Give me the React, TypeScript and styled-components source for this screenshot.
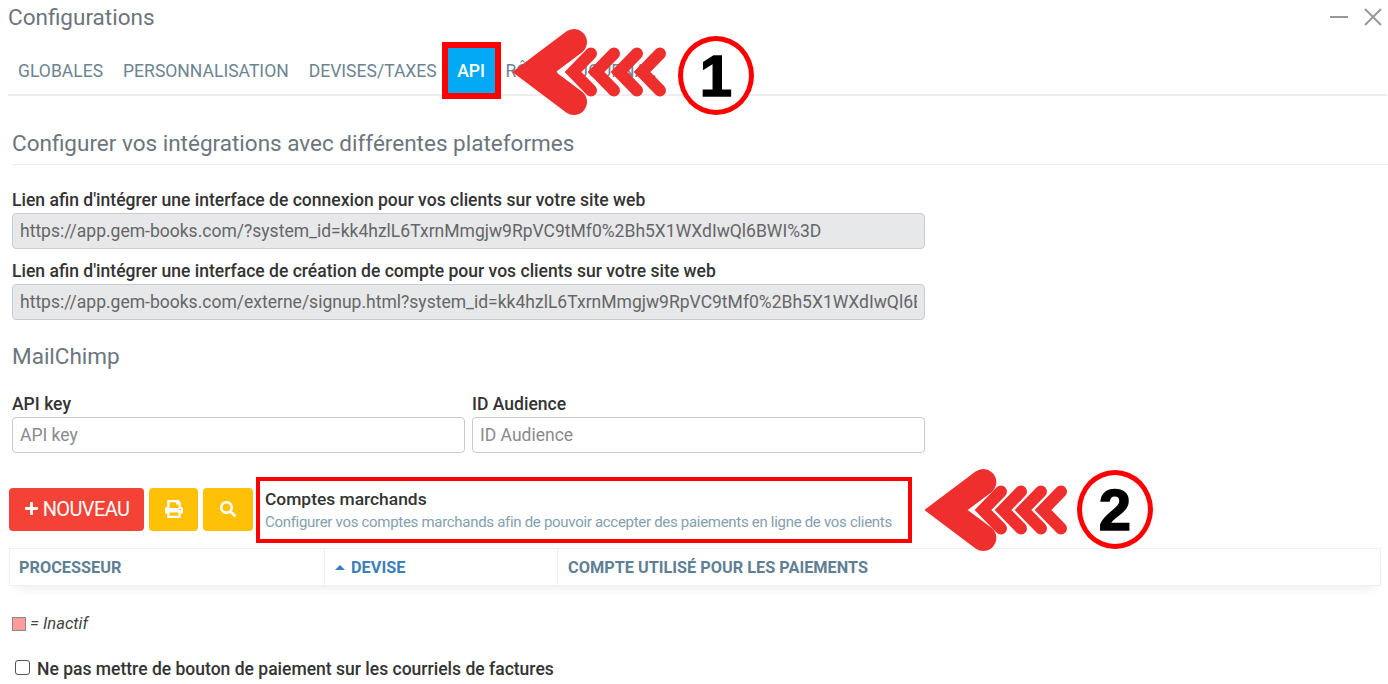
import React from "react";
import styled, { createGlobalStyle } from "styled-components";
import { FaPlus, FaPrint, FaSearch } from "react-icons/fa";

const GlobalStyle = createGlobalStyle`
  html, body {
    margin: 0;
    padding: 0;
    background: #fff;
    overflow: hidden;
  }
  * {
    box-sizing: border-box;
  }
`;

const Page = styled.div`
  position: relative;
  width: 1388px;
  height: 684px;
  overflow: hidden;
  font-family: Roboto, "Liberation Sans", sans-serif;
  color: #333;
`;
const TitleBar = styled.div`
  height: 42px;
  padding: 0 0 8px 8px;
  display: flex;
  justify-content: space-between;
  align-items: center;
`;
const Title = styled.div`
  font-size: 22.5px;
  color: #6c757d;
`;
const WindowIcons = styled.div`
  display: flex;
  gap: 14px;
  padding-right: 5px;
  color: #999;
`;
const Tabs = styled.div`
  height: 54px;
  margin: 0 1px 0 8px;
  display: flex;
  align-items: stretch;
  border-bottom: 2px solid #eee;
`;
const Tab = styled.div<{ $active?: boolean }>`
  padding: 0 ${(p) => (p.$active ? "10.5px" : "10px")};
  margin-top: 5px;
  display: flex;
  align-items: center;
  font-size: 17.55px;
  font-weight: ${(p) => (p.$active ? 500 : 400)};
  color: ${(p) => (p.$active ? "#fff" : "#6c8491")};
  background: ${(p) => (p.$active ? "#03a9f4" : "transparent")};
  outline: ${(p) => (p.$active ? "6px solid #ff0000" : "none")};
  outline-offset: -1px;
`;
const Content = styled.div`
  padding-left: 12px;
`;
const SectionTitle = styled.div`
  height: 69px;
  padding-top: 32px;
  font-size: 22.5px;
  line-height: 30px;
  color: #6c757d;
  border-bottom: 1px solid #eee;
`;
const Form = styled.div`
  width: 913px;
`;
const FieldLabel = styled.label`
  display: block;
  height: 25px;
  font-size: 17.55px;
  font-weight: 500;
  line-height: 25px;
  color: #333;
`;
const TextField = styled.input<{ $disabled?: boolean }>`
  display: block;
  width: 100%;
  height: 36px;
  padding: 0 7px;
  border: 1px solid #c9cbcf;
  border-radius: 4px;
  outline: none;
  font-family: inherit;
  font-size: 17.52px;
  color: #666;
  background: ${(p) => (p.$disabled ? "#e7e8ea" : "#fff")};
  &::placeholder {
    color: #8a8a8a;
    opacity: 1;
  }
`;
const LinkGroup = styled.div`
  margin-top: 10px;
`;
const LinkGroupFirst = styled(LinkGroup)`
  margin-top: 23px;
`;
const SubTitle = styled.div`
  margin-top: 20px;
  font-size: 22.5px;
  line-height: 32px;
  color: #6c757d;
`;
const FieldRow = styled.div`
  margin-top: 20px;
  display: grid;
  grid-template-columns: 1fr 1fr;
  gap: 7px;
`;
const Toolbar = styled.div`
  margin: 24px 0 0 9px;
  display: flex;
  align-items: flex-start;
  gap: 5px;
`;
const ActionButton = styled.div<{ $color: string; $width: number }>`
  width: ${(p) => p.$width}px;
  height: 43px;
  margin-top: 11px;
  padding-bottom: 2px;
  display: flex;
  align-items: center;
  justify-content: center;
  gap: 4px;
  border-radius: 4px;
  color: #fff;
  font-size: 20px;
  letter-spacing: -0.6px;
  background: ${(p) => p.$color};
`;
const InfoBox = styled.div`
  width: 656px;
  height: 66px;
  margin-left: -2px;
  padding: 8px 0 0 5px;
  border: 4px solid #ff0000;
`;
const InfoTitle = styled.div`
  font-size: 17.4px;
  font-weight: 500;
  line-height: 20px;
`;
const InfoText = styled.div`
  margin-top: 4px;
  font-size: 15px;
  letter-spacing: -0.3px;
  line-height: 18px;
  white-space: nowrap;
  color: #84a0ae;
`;
const Table = styled.div`
  width: 1372px;
  height: 38px;
  margin: 5px 0 0 9px;
  display: grid;
  grid-template-columns: 314px 233px 1fr;
  border: 1px solid #edf1f5;
  box-shadow: 0 8px 12px -6px rgba(0, 0, 0, 0.08);
`;
const HeaderCell = styled.div<{ $sorted?: boolean }>`
  padding-left: 9px;
  display: flex;
  align-items: center;
  gap: 6px;
  font-size: 16.3px;
  font-weight: 700;
  color: ${(p) => (p.$sorted ? "#3d7fb8" : "#5f7f94")};
  & + & {
    padding-left: 10px;
    border-left: 1px solid #edf1f5;
  }
`;
const SortCaret = styled.span`
  width: 0;
  height: 0;
  border-left: 5px solid transparent;
  border-right: 5px solid transparent;
  border-bottom: 5px solid #3d7fb8;
`;
const Legend = styled.div`
  margin: 28px 0 0 12px;
  display: flex;
  align-items: center;
  gap: 4px;
  font-size: 16.6px;
  font-style: italic;
  line-height: 20px;
  color: #444;
`;
const Swatch = styled.span`
  width: 14px;
  height: 14px;
  background: #ff9c9c;
  border: 1px solid #888;
`;
const CheckRow = styled.label`
  margin: 24px 0 0 15px;
  display: flex;
  align-items: center;
  gap: 7px;
  font-size: 17.53px;
  font-weight: 500;
  line-height: 22px;
  color: #333;
`;
const CheckBox = styled.span`
  width: 15px;
  height: 15px;
  margin-top: -3px;
  border: 1px solid #555;
  border-radius: 3px;
  background: #fff;
`;
const ArrowMark = styled.svg<{ $x: number; $y: number }>`
  position: absolute;
  left: ${(p) => p.$x}px;
  top: ${(p) => p.$y}px;
`;
const NumberBadge = styled.div<{ $x: number; $y: number }>`
  position: absolute;
  left: ${(p) => p.$x}px;
  top: ${(p) => p.$y}px;
  width: 76px;
  height: 79px;
  display: flex;
  align-items: center;
  justify-content: center;
  border: 5px solid #ff0000;
  border-radius: 50%;
  background: #fff;
  font-family: "Liberation Sans", sans-serif;
  font-size: 58px;
  font-weight: 700;
  -webkit-text-stroke: 1.5px #000;
  color: #000;
`;

// big chevron plus four small ones, origin is the tip of the big one
const Arrow = ({
  x,
  y,
  first,
  step,
  spread,
}: {
  x: number;
  y: number;
  first: number;
  step: number;
  spread: number;
}) => {
  const reach = 21 + (spread * 4) / 3;
  return (
    <ArrowMark $x={x} $y={y - 45} width={170} height={90} viewBox="0 0 170 90">
      <g fill="none" stroke="#ef2e2e" strokeLinecap="round">
        {[0, 1, 2, 3].map((i) => {
          const v = first + 8 + i * step;
          return (
            <path key={i} d={`M${v + 18} 26.5 L${v} 45 L${v + 18} 63.5`} strokeWidth="12" />
          );
        })}
        <path d={`M${reach} ${45 - spread} L21 45 L${reach} ${45 + spread}`} strokeWidth="26" />
      </g>
    </ArrowMark>
  );
};

const App = () => {
  return (
    <Page>
      <GlobalStyle />
      <TitleBar>
        <Title>Configurations</Title>
        <WindowIcons>
          <svg width="20" height="20" viewBox="0 0 20 20" stroke="currentColor" strokeWidth="2">
            <path d="M1 10H19" />
          </svg>
          <svg width="20" height="20" viewBox="0 0 20 20" stroke="currentColor" strokeWidth="2" fill="none">
            <path d="M2 2L18 18M18 2L2 18" />
          </svg>
        </WindowIcons>
      </TitleBar>
      <Tabs>
        <Tab>GLOBALES</Tab>
        <Tab>PERSONNALISATION</Tab>
        <Tab>DEVISES/TAXES</Tab>
        <Tab $active>API</Tab>
        <Tab>RÔLES</Tab>
        <Tab>JOURNAL</Tab>
      </Tabs>
      <Content>
        <SectionTitle>Configurer vos intégrations avec différentes plateformes</SectionTitle>
        <Form>
          <LinkGroupFirst>
            <FieldLabel>Lien afin d'intégrer une interface de connexion pour vos clients sur votre site web</FieldLabel>
            <TextField
              $disabled
              readOnly
              value="https://app.gem-books.com/?system_id=kk4hzlL6TxrnMmgjw9RpVC9tMf0%2Bh5X1WXdIwQl6BWI%3D"
            />
          </LinkGroupFirst>
          <LinkGroup>
            <FieldLabel>Lien afin d'intégrer une interface de création de compte pour vos clients sur votre site web</FieldLabel>
            <TextField
              $disabled
              readOnly
              value="https://app.gem-books.com/externe/signup.html?system_id=kk4hzlL6TxrnMmgjw9RpVC9tMf0%2Bh5X1WXdIwQl6BWI%3D"
            />
          </LinkGroup>
          <SubTitle>MailChimp</SubTitle>
          <FieldRow>
            <div>
              <FieldLabel>API key</FieldLabel>
              <TextField placeholder="API key" />
            </div>
            <div>
              <FieldLabel>ID Audience</FieldLabel>
              <TextField placeholder="ID Audience" />
            </div>
          </FieldRow>
        </Form>
      </Content>
      <Toolbar>
        <ActionButton $color="#f44336" $width={135}>
          <FaPlus size={15} />
          NOUVEAU
        </ActionButton>
        <ActionButton $color="#ffc107" $width={49}>
          <FaPrint size={18} />
        </ActionButton>
        <ActionButton $color="#ffc107" $width={50}>
          <FaSearch size={16} />
        </ActionButton>
        <InfoBox>
          <InfoTitle>Comptes marchands</InfoTitle>
          <InfoText>Configurer vos comptes marchands afin de pouvoir accepter des paiements en ligne de vos clients</InfoText>
        </InfoBox>
      </Toolbar>
      <Table>
        <HeaderCell>PROCESSEUR</HeaderCell>
        <HeaderCell $sorted>
          <SortCaret />
          DEVISE
        </HeaderCell>
        <HeaderCell>COMPTE UTILISÉ POUR LES PAIEMENTS</HeaderCell>
      </Table>
      <Legend>
        <Swatch />= Inactif
      </Legend>
      <CheckRow>
        <CheckBox />
        Ne pas mettre de bouton de paiement sur les courriels de factures
      </CheckRow>
      <Arrow x={513} y={72} first={52} step={23} spread={30} />
      <NumberBadge $x={678} $y={36}>1</NumberBadge>
      <Arrow x={925} y={510} first={50} step={20} spread={28} />
      <NumberBadge $x={1077} $y={470}>2</NumberBadge>
    </Page>
  );
};

export default App;
